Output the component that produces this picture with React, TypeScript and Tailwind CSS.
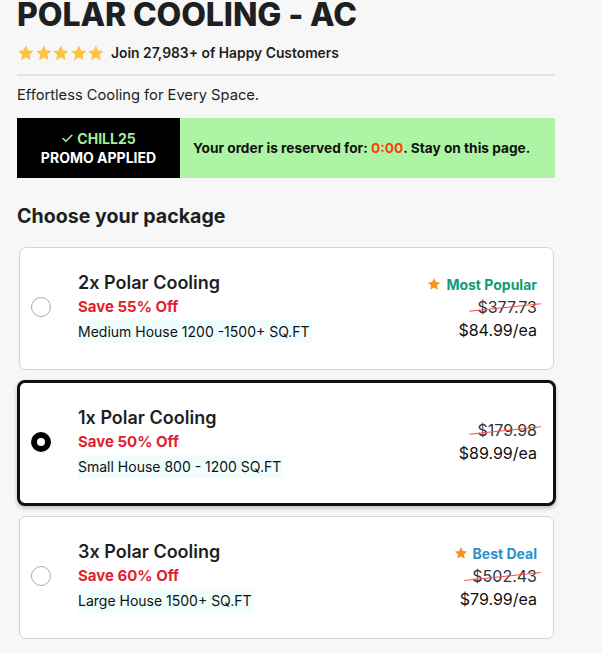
import { Check } from "lucide-react";

type Pacote = {
  nome: string;
  desconto: string;
  tamanho: string;
  selo?: { texto: string; cor: string };
  antigo: string;
  preco: string;
  selecionado?: boolean;
};

const pacotes: Pacote[] = [
  {
    nome: "2x Polar Cooling",
    desconto: "Save 55% Off",
    tamanho: "Medium House 1200 -1500+ SQ.FT",
    selo: { texto: "Most Popular", cor: "text-[#119b79]" },
    antigo: "$377.73",
    preco: "$84.99/ea",
  },
  {
    nome: "1x Polar Cooling",
    desconto: "Save 50% Off",
    tamanho: "Small House 800 - 1200 SQ.FT",
    antigo: "$179.98",
    preco: "$89.99/ea",
    selecionado: true,
  },
  {
    nome: "3x Polar Cooling",
    desconto: "Save 60% Off",
    tamanho: "Large House 1500+ SQ.FT",
    selo: { texto: "Best Deal", cor: "text-[#2b90c9]" },
    antigo: "$502.43",
    preco: "$79.99/ea",
  },
];

function Estrela({ className }: { className: string }) {
  return (
    <svg viewBox="0 0 24 24" className={className} fill="currentColor">
      <path d="M12 1.8l3.1 6.9 7.4.7-5.6 5 1.7 7.4L12 17.9l-6.6 3.9 1.7-7.4-5.6-5 7.4-.7z" />
    </svg>
  );
}

export default function App() {
  return (
    <main className="min-h-screen bg-[#f7f7f7] font-['Inter',sans-serif] text-[#1d1f22]">
      <div className="ml-[17px] w-[539px]">
        {/* Cabeçalho */}
        <h1 className="-mt-[1px] text-[32px] leading-8 font-extrabold tracking-[-0.1px]">POLAR COOLING - AC</h1>

        <div className="mt-[13px] flex items-center gap-[6px]">
          <div className="flex text-[#fdc23e]">
            {[0, 1, 2, 3, 4].map((i) => (
              <Estrela key={i} className="h-[18px] w-[17.6px]" />
            ))}
          </div>
          <span className="text-[13.85px] leading-[18px] font-semibold">Join 27,983+ of Happy Customers</span>
        </div>

        <div className="mt-[12px] h-[2px] w-[538px] bg-[#e2e2e2]" />

        <p className="mt-[9px] text-[14.7px] leading-[20px]">Effortless Cooling for Every Space.</p>

        {/* Faixa promo */}
        <div className="mt-[13px] flex h-[60px] w-[538px]">
          <div className="flex w-[163px] flex-col items-center justify-center bg-black text-[14px] leading-[19px] font-bold">
            <span className="flex items-center gap-[3px] text-[#a3ef98]">
              <Check className="h-[13px] w-[13px]" strokeWidth={3} />
              CHILL25
            </span>
            <span className="text-white">PROMO APPLIED</span>
          </div>
          <div className="flex flex-1 items-center bg-[#adf5a5] pl-[13px] text-[13.7px] font-bold text-[#111]">
            Your order is reserved for:&nbsp;<span className="text-[#ff3d0a]">0:00</span>. Stay on this page.
          </div>
        </div>

        <h2 className="mt-[26px] text-[19.6px] leading-[24px] font-bold">Choose your package</h2>

        {/* Pacotes */}
        <div className="mt-[19px] flex flex-col gap-[10px]">
          {pacotes.map((p) => (
            <div
              key={p.nome}
              className={
                p.selecionado
                  ? "flex w-[539px] items-center rounded-[8px] border-[3px] border-[#111] bg-white pt-[23px] pr-[16px] pb-[25px] pl-[11px] shadow-[0_2px_4px_rgba(0,0,0,0.25)]"
                  : "mx-[2px] flex w-[535px] items-center rounded-[7px] border border-[#d4d4d4] bg-white pt-[23px] pr-[16px] pb-[26px] pl-[11px]"
              }
            >
              {p.selecionado ? (
                <span className="h-[20px] w-[20px] shrink-0 rounded-full border-[6px] border-black bg-white" />
              ) : (
                <span className="h-[20px] w-[20px] shrink-0 rounded-full border-[1.5px] border-[#a9a9a9] bg-white" />
              )}

              <div className="ml-[27px] flex flex-1 flex-col">
                <span className="text-[18px] leading-[24px] font-semibold">{p.nome}</span>
                <span className="text-[15px] leading-[24px] font-bold text-[#e11f2d]">{p.desconto}</span>
                <span className="mt-[1px] self-start bg-[#effdfd] pr-[2px] text-[14px] leading-[23px] text-[#111]">
                  {p.tamanho}
                </span>
              </div>

              <div className="flex flex-col items-end text-[16px] leading-[23px] text-[#111]">
                {p.selo && (
                  <span className={`flex items-center gap-[5px] text-[14px] font-bold ${p.selo.cor}`}>
                    <Estrela className="h-[14px] w-[14px] text-[#f7921f]" />
                    {p.selo.texto}
                  </span>
                )}
                <span className="relative text-[#333]">
                  {p.antigo}
                  <span className="absolute top-[11px] right-[-4px] left-[-8px] h-[1.2px] -rotate-[6deg] bg-[#ff4a4a]" />
                </span>
                <span>{p.preco}</span>
              </div>
            </div>
          ))}
        </div>
      </div>
    </main>
  );
}
